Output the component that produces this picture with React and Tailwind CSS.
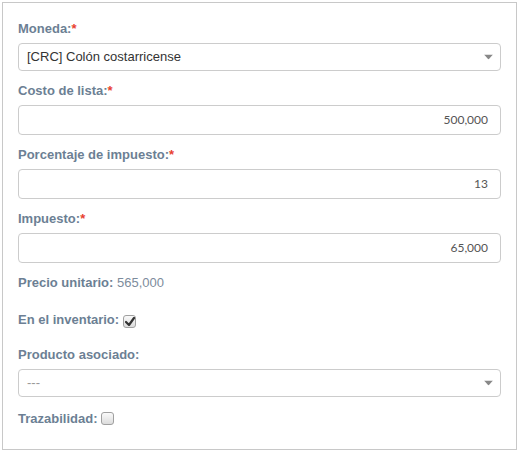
import React from "react";

const labelCls = "block text-[13px] leading-[18px] font-bold text-[#6c7f94] mb-[5px]";
const font = { fontFamily: '"Liberation Sans", Arial, sans-serif' };

function Star() {
  return <span className="text-[#e8412f] font-bold">*</span>;
}

function Caret() {
  return (
    <svg width="9" height="5" viewBox="0 0 9 5" className="absolute right-[7px] top-1/2 -translate-y-1/2">
      <path d="M0 0 L9 0 L4.5 5 Z" fill="#888" />
    </svg>
  );
}

function Select({ children, placeholder }) {
  return (
    <div className="relative h-[28px] border border-[#cccccc] rounded-[4px] bg-white flex items-center pl-[8px]">
      <span className={placeholder ? "text-[13px] text-[#999]" : "text-[13px] text-[#333]"}>{children}</span>
      <Caret />
    </div>
  );
}

function NumInput({ value }) {
  return (
    <div className="h-[30px] border border-[#cccccc] rounded-[4px] bg-white flex items-center justify-end pr-[12px]">
      <span className="text-[12px] text-[#555]" style={{ fontFamily: 'Lato, sans-serif' }}>{value}</span>
    </div>
  );
}

function Check({ checked }) {
  return (
    <span className="inline-flex items-center justify-center w-[13px] h-[13px] border border-[#a0a0a0] rounded-[3px] bg-gradient-to-b from-[#fafafa] to-[#dcdcdc] align-[-2px] ml-[4px]">
      {checked && (
        <svg width="10" height="9" viewBox="0 0 10 9">
          <path d="M1 5 L4 8 L9 1" stroke="#333" strokeWidth="2.2" fill="none" strokeLinecap="round" strokeLinejoin="round" />
        </svg>
      )}
    </span>
  );
}

export default function App() {
  return (
    <div className="p-[2px] bg-white" style={font}>
      <div className="w-[515px] h-[448px] border border-[#c8c8c8] bg-white px-[15px] pt-[17px]">
        <div className="mb-[11px]">
          <label className={labelCls}>Moneda:<Star /></label>
          <Select>[CRC] Colón costarricense</Select>
        </div>
        <div className="mb-[11px]">
          <label className={labelCls}>Costo de lista:<Star /></label>
          <NumInput value="500,000" />
        </div>
        <div className="mb-[11px]">
          <label className={labelCls}>Porcentaje de impuesto:<Star /></label>
          <NumInput value="13" />
        </div>
        <div className="mb-[11px]">
          <label className={labelCls}>Impuesto:<Star /></label>
          <NumInput value="65,000" />
        </div>
        <div className="mb-[19px] text-[13px] leading-[18px]">
          <span className="font-bold text-[#6c7f94]">Precio unitario:</span>
          <span className="text-[#7d8c9c]"> 565,000</span>
        </div>
        <div className="mb-[17px] text-[13px] leading-[18px]">
          <span className="font-bold text-[#6c7f94]">En el inventario:</span>
          <Check checked />
        </div>
        <div className="mb-[13px]">
          <label className={labelCls + " !mb-[5px]"}>Producto asociado:</label>
          <Select placeholder>---</Select>
        </div>
        <div className="text-[13px] leading-[18px]">
          <span className="font-bold text-[#6c7f94]">Trazabilidad:</span>
          <Check />
        </div>
      </div>
    </div>
  );
}
